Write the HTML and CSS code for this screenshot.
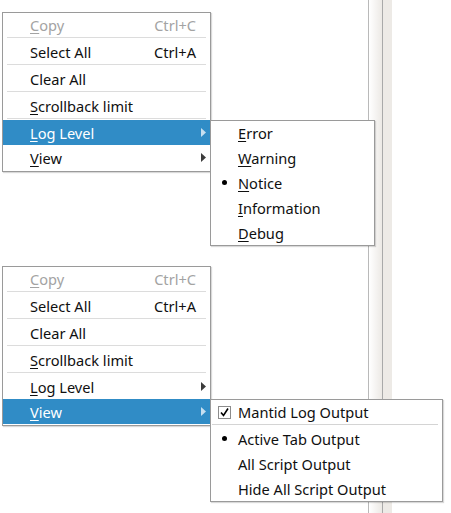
FILE: index.html
```html
<!DOCTYPE html>
<html lang="en">
<head>
  <meta charset="UTF-8">
  <title>Messages context menu</title>
  <link rel="stylesheet" href="styles.css">
</head>
<body>
  <div class="screen">
    <div class="pane"></div>
    <div class="scrollbar"><div class="track"></div><div class="gutter"></div></div>
    <div class="rest"></div>

    <!-- first popup: Log Level open -->
    <div class="menu main top-a">
      <div class="item disabled"><span class="label"><u>C</u>opy</span><span class="shortcut">Ctrl+C</span></div>
      <div class="sep"></div>
      <div class="item"><span class="label">Select All</span><span class="shortcut">Ctrl+A</span></div>
      <div class="sep"></div>
      <div class="item"><span class="label">Clear All</span></div>
      <div class="sep"></div>
      <div class="item"><span class="label"><u>S</u>crollback limit</span></div>
      <div class="sep"></div>
      <div class="item sub active"><span class="label"><u>L</u>og Level</span><svg class="arrow" width="5" height="9" viewBox="0 0 5 9"><polygon points="0,0 5,4.5 0,9"/></svg></div>
      <div class="item sub"><span class="label"><u>V</u>iew</span><svg class="arrow" width="5" height="9" viewBox="0 0 5 9"><polygon points="0,0 5,4.5 0,9"/></svg></div>
    </div>

    <div class="menu submenu levels">
      <div class="item"><span class="label"><u>E</u>rror</span></div>
      <div class="item"><span class="label"><u>W</u>arning</span></div>
      <div class="item"><span class="mark bullet"></span><span class="label"><u>N</u>otice</span></div>
      <div class="item"><span class="label"><u>I</u>nformation</span></div>
      <div class="item"><span class="label"><u>D</u>ebug</span></div>
    </div>

    <!-- second popup: View open -->
    <div class="menu main top-b">
      <div class="item disabled"><span class="label"><u>C</u>opy</span><span class="shortcut">Ctrl+C</span></div>
      <div class="sep"></div>
      <div class="item"><span class="label">Select All</span><span class="shortcut">Ctrl+A</span></div>
      <div class="sep"></div>
      <div class="item"><span class="label">Clear All</span></div>
      <div class="sep"></div>
      <div class="item"><span class="label"><u>S</u>crollback limit</span></div>
      <div class="sep"></div>
      <div class="item sub"><span class="label"><u>L</u>og Level</span><svg class="arrow" width="5" height="9" viewBox="0 0 5 9"><polygon points="0,0 5,4.5 0,9"/></svg></div>
      <div class="item sub active"><span class="label"><u>V</u>iew</span><svg class="arrow" width="5" height="9" viewBox="0 0 5 9"><polygon points="0,0 5,4.5 0,9"/></svg></div>
    </div>

    <div class="menu submenu views">
      <div class="item"><span class="mark check"><svg width="11" height="11" viewBox="0 0 11 11"><path d="M2 5.5 L4.5 8.5 L9 1.5"/></svg></span><span class="label">Mantid Log Output</span></div>
      <div class="sep"></div>
      <div class="item"><span class="mark bullet"></span><span class="label">Active Tab Output</span></div>
      <div class="item"><span class="label">All Script Output</span></div>
      <div class="item"><span class="label">Hide All Script Output</span></div>
    </div>
  </div>
</body>
</html>
```

FILE: styles.css
```css
body { margin: 0; background: #fff; font-family: "Noto Sans", "Open Sans", sans-serif; font-size: 14.6px; color: #101010; }
.screen { position: relative; display: flex; width: 451px; height: 513px; overflow: hidden; }
.pane { width: 368px; background: #fff; }
.scrollbar { display: flex; }
.track { width: 13px; border-left: 1px solid #b9b9b9; border-right: 1px solid #a9a9a9; background: linear-gradient(to right, #fff, #ece9e5); }
.gutter { width: 9px; background: #edeae6; }
.rest { flex: 1; background: #fff; }

.menu { position: absolute; background: #fff; border: 1px solid #9a9a9a; box-shadow: 1px 1px 1px rgba(0,0,0,0.15); }
.main { left: 2px; width: 207px; padding-bottom: 1px; }
.top-a { top: 12px; }
.top-b { top: 266px; }
.submenu { left: 210px; }
.levels { top: 120px; width: 163px; }
.views { top: 399px; width: 231px; }

.item { display: flex; align-items: center; height: 25px; padding: 0 14px 0 27px; white-space: nowrap; }
.item:first-child { height: 24px; }
.item u { text-decoration-thickness: 1px; text-underline-offset: 2px; }
.item .shortcut { margin-left: auto; }
.item.sub { padding-right: 4px; }
.item .arrow { margin-left: auto; fill: #3c3c3c; }
.item.active { background: #308cc6; color: #fff; }
.item.active .arrow { fill: #c6dff0; }
.item.disabled { color: #a3a3a3; }

.sep { height: 1px; margin: 0 4px 1px; background: #dcdcdc; }
.submenu .sep { margin: 0 4px 1px 1px; background: #d4d4d4; }

.mark { display: flex; align-items: center; justify-content: center; width: 13px; height: 13px; margin-left: -20px; margin-right: 7px; box-sizing: border-box; }
.mark.bullet::before { content: ""; width: 5px; height: 5px; border-radius: 50%; background: #000; }
.mark.check { border: 1px solid #8c8c8c; background: #fff; }
.mark.check path { fill: none; stroke: #000; stroke-width: 1.6; }
```
